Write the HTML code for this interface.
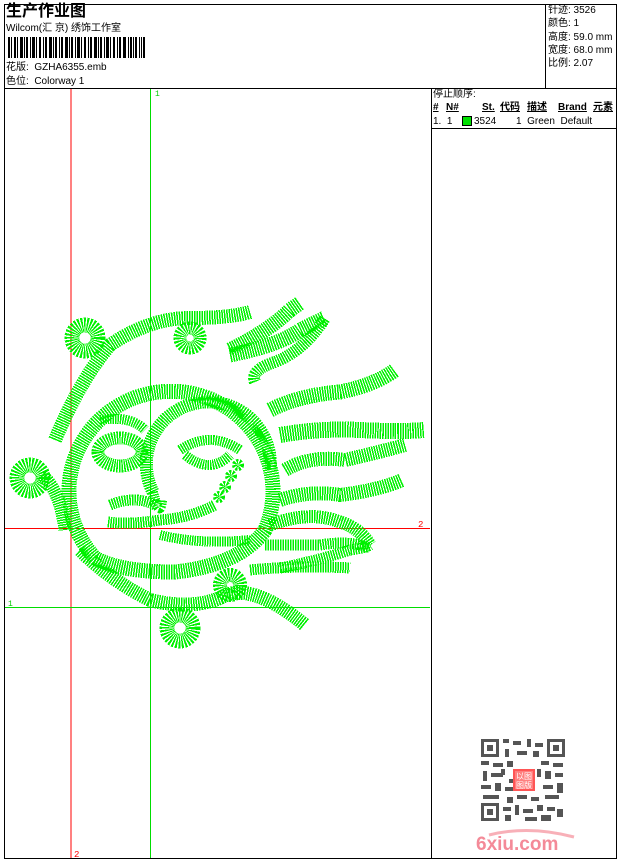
<!DOCTYPE html>
<html><head><meta charset="utf-8"><style>
*{margin:0;padding:0;box-sizing:border-box}
body{width:620px;height:860px;background:#fff;position:relative;overflow:hidden;font-family:"Liberation Sans","Noto Sans CJK SC",sans-serif;color:#000}
.a{position:absolute}
.t{font-size:10px;white-space:nowrap;line-height:12px}
</style></head><body>
<div class="a" style="left:4px;top:4px;width:613px;height:855px;border:1px solid #000"></div>
<div class="a" style="left:4px;top:88px;width:613px;height:1px;background:#000"></div>
<div class="a" style="left:545px;top:4px;width:1px;height:84px;background:#000"></div>
<div class="a" style="left:431px;top:88px;width:1px;height:771px;background:#000"></div>
<div class="a" style="left:431px;top:128px;width:186px;height:1px;background:#000"></div>
<div class="a" style="left:6px;top:2px;font-size:16px;font-weight:bold;line-height:20px">生产作业图</div>
<div class="a t" style="left:6px;top:23px">Wilcom(汇 京) 绣饰工作室</div>
<svg class="a" style="left:8px;top:37px" width="145" height="21">
<g fill="#000">
<rect x="0" width="2" height="21"/><rect x="3" width="1" height="21"/><rect x="6" width="2" height="21"/><rect x="9" width="1" height="21"/><rect x="12" width="3" height="21"/><rect x="16" width="1" height="21"/><rect x="18" width="2" height="21"/><rect x="22" width="1" height="21"/><rect x="24" width="3" height="21"/><rect x="28" width="1" height="21"/><rect x="31" width="2" height="21"/><rect x="35" width="1" height="21"/><rect x="37" width="2" height="21"/><rect x="41" width="3" height="21"/><rect x="45" width="1" height="21"/><rect x="47" width="2" height="21"/><rect x="51" width="1" height="21"/><rect x="53" width="2" height="21"/><rect x="57" width="3" height="21"/><rect x="61" width="1" height="21"/><rect x="63" width="2" height="21"/><rect x="67" width="1" height="21"/><rect x="69" width="3" height="21"/><rect x="73" width="1" height="21"/><rect x="76" width="2" height="21"/><rect x="80" width="1" height="21"/><rect x="82" width="2" height="21"/><rect x="86" width="3" height="21"/><rect x="90" width="1" height="21"/><rect x="92" width="2" height="21"/><rect x="96" width="1" height="21"/><rect x="98" width="3" height="21"/><rect x="102" width="1" height="21"/><rect x="105" width="2" height="21"/><rect x="109" width="1" height="21"/><rect x="111" width="2" height="21"/><rect x="115" width="3" height="21"/><rect x="120" width="1" height="21"/><rect x="122" width="2" height="21"/><rect x="125" width="1" height="21"/><rect x="127" width="2" height="21"/><rect x="131" width="1" height="21"/><rect x="133" width="1" height="21"/><rect x="135" width="2" height="21"/>
</g></svg>
<div class="a t" style="left:6px;top:62px">花版:&nbsp; GZHA6355.emb</div>
<div class="a t" style="left:6px;top:76px">色位:&nbsp; Colorway 1</div>
<div class="a t" style="left:548px;top:5px">针迹: 3526</div>
<div class="a t" style="left:548px;top:18px">颜色: 1</div>
<div class="a t" style="left:548px;top:32px">高度: 59.0 mm</div>
<div class="a t" style="left:548px;top:45px">宽度: 68.0 mm</div>
<div class="a t" style="left:548px;top:58px">比例: 2.07</div>
<div class="a t" style="left:433px;top:89px">停止顺序:</div>
<div class="a t" style="left:433px;top:102px;font-weight:bold;text-decoration:underline">#</div>
<div class="a t" style="left:446px;top:102px;font-weight:bold;text-decoration:underline">N#</div>
<div class="a t" style="left:482px;top:102px;font-weight:bold;text-decoration:underline">St.</div>
<div class="a t" style="left:500px;top:102px;font-weight:bold;text-decoration:underline">代码</div>
<div class="a t" style="left:527px;top:102px;font-weight:bold;text-decoration:underline">描述</div>
<div class="a t" style="left:558px;top:102px;font-weight:bold;text-decoration:underline">Brand</div>
<div class="a t" style="left:593px;top:102px;font-weight:bold;text-decoration:underline">元素</div>
<div class="a t" style="left:433px;top:116px">1.&nbsp; 1</div>
<div class="a" style="left:462px;top:116px;width:10px;height:10px;background:#00e000;border:1px solid #000"></div>
<div class="a t" style="left:474px;top:116px">3524</div>
<div class="a t" style="left:516px;top:116px">1&nbsp; Green&nbsp; Default</div>

<svg class="a" style="left:0;top:0" width="620" height="860">
<line x1="71" y1="89" x2="71" y2="858" stroke="#f00" stroke-width="1"/>
<line x1="150.5" y1="89" x2="150.5" y2="858" stroke="#0d0" stroke-width="1"/>
<line x1="5" y1="528.5" x2="430" y2="528.5" stroke="#f00" stroke-width="1"/>
<line x1="5" y1="607.5" x2="430" y2="607.5" stroke="#0d0" stroke-width="1"/>
<text x="155" y="96" font-size="8" fill="#0c0" font-family="Liberation Mono">1</text>
<text x="8" y="606" font-size="8" fill="#0c0" font-family="Liberation Mono">1</text>
<text x="418" y="527" font-size="9" fill="#f00" font-family="Liberation Mono">2</text>
<text x="74" y="857" font-size="9" fill="#f00" font-family="Liberation Mono">2</text>
<g fill="none" stroke="#00f000" stroke-dasharray="1.5 1" stroke-linecap="butt" shape-rendering="crispEdges">
<path d="M95 558 A102 100 0 1 1 265 530 Q240 565 175 572 Q120 572 95 558" stroke-width="15"/>
<path d="M153 492 A62 62 0 1 1 270 470" stroke-width="13"/>
<path d="M153 492 Q160 520 162 500" stroke-width="10"/>
<path d="M55 440 Q80 380 110 345 Q150 318 190 318 Q230 318 250 312" stroke-width="14"/>
<circle cx="85" cy="338" r="13" stroke-width="15"/>
<circle cx="190" cy="338" r="10" stroke-width="13"/>
<path d="M230 350 Q270 330 290 310 L300 303" stroke-width="15"/>
<path d="M230 355 Q280 345 300 330 L325 318" stroke-width="15"/>
<path d="M255 382 Q250 370 275 362 Q305 350 325 318" stroke-width="12"/>
<path d="M270 410 Q300 395 340 392 Q375 385 395 370" stroke-width="15"/>
<path d="M280 435 Q320 428 360 430 Q400 432 424 430" stroke-width="16"/>
<path d="M285 470 Q310 455 345 460 Q380 452 405 445" stroke-width="14"/>
<path d="M280 500 Q310 490 340 495 Q380 490 402 480" stroke-width="14"/>
<path d="M270 525 Q310 510 340 522 Q360 528 370 545" stroke-width="13"/>
<path d="M265 545 Q300 545 320 545 Q350 540 370 548" stroke-width="11"/>
<path d="M280 568 Q320 560 350 550 Q365 548 370 545" stroke-width="11"/>
<path d="M250 570 Q300 565 350 568" stroke-width="11"/>
<circle cx="30" cy="478" r="13" stroke-width="15"/>
<path d="M42 475 Q60 490 65 530" stroke-width="13"/>
<path d="M80 550 Q110 580 150 600 Q190 610 220 598 Q250 580 305 625" stroke-width="14"/>
<circle cx="230" cy="585" r="10" stroke-width="14"/>
<circle cx="180" cy="628" r="13" stroke-width="15"/>
<path d="M120 440 m-22 12 a22 14 0 1 0 44 0 a22 14 0 1 0 -44 0" stroke-width="13"/>
<path d="M100 420 Q130 415 145 430" stroke-width="10"/>
<path d="M180 450 Q210 430 240 450" stroke-width="10"/>
<path d="M185 455 Q210 475 230 455" stroke-width="10"/>
<path d="M110 505 Q135 495 155 505" stroke-width="11"/>
<path d="M108 522 Q130 525 160 520 Q190 518 215 505" stroke-width="11"/>
<path d="M160 535 Q200 545 250 540" stroke-width="10"/>
<circle cx="238" cy="465" r="3" stroke-width="6"/><circle cx="231" cy="476" r="3" stroke-width="6"/><circle cx="225" cy="487" r="3" stroke-width="6"/><circle cx="219" cy="497" r="3" stroke-width="6"/>
</g>
</svg>

<svg class="a" style="left:481px;top:739px" width="84" height="82">
<rect width="84" height="82" fill="#fff"/>
<g fill="#555">
<rect x="0" y="0" width="18" height="18"/><rect x="3" y="3" width="12" height="12" fill="#fff"/><rect x="6" y="6" width="6" height="6"/>
<rect x="66" y="0" width="18" height="18"/><rect x="69" y="3" width="12" height="12" fill="#fff"/><rect x="72" y="6" width="6" height="6"/>
<rect x="0" y="64" width="18" height="18"/><rect x="3" y="67" width="12" height="12" fill="#fff"/><rect x="6" y="70" width="6" height="6"/>
<rect x="22" y="0" width="6" height="4"/><rect x="32" y="2" width="8" height="4"/><rect x="46" y="0" width="4" height="8"/><rect x="54" y="4" width="8" height="4"/><rect x="24" y="10" width="4" height="8"/><rect x="36" y="12" width="10" height="4"/><rect x="52" y="12" width="6" height="6"/>
<rect x="0" y="22" width="8" height="4"/><rect x="12" y="24" width="10" height="4"/><rect x="26" y="22" width="6" height="6"/><rect x="60" y="22" width="8" height="4"/><rect x="72" y="24" width="10" height="4"/>
<rect x="2" y="32" width="4" height="10"/><rect x="10" y="34" width="12" height="4"/><rect x="64" y="32" width="6" height="8"/><rect x="74" y="34" width="8" height="4"/>
<rect x="0" y="46" width="10" height="4"/><rect x="14" y="44" width="6" height="8"/><rect x="24" y="48" width="8" height="4"/><rect x="62" y="46" width="10" height="4"/><rect x="76" y="44" width="6" height="10"/>
<rect x="2" y="56" width="16" height="4"/><rect x="26" y="58" width="6" height="6"/><rect x="36" y="56" width="10" height="4"/><rect x="50" y="58" width="8" height="4"/><rect x="64" y="56" width="14" height="4"/>
<rect x="22" y="68" width="8" height="4"/><rect x="34" y="66" width="4" height="10"/><rect x="42" y="70" width="10" height="4"/><rect x="56" y="66" width="6" height="6"/><rect x="66" y="68" width="8" height="4"/><rect x="76" y="70" width="6" height="8"/><rect x="24" y="76" width="6" height="6"/><rect x="44" y="78" width="12" height="4"/><rect x="60" y="76" width="10" height="6"/>
<rect x="20" y="30" width="4" height="6"/><rect x="56" y="30" width="4" height="8"/><rect x="28" y="40" width="4" height="4"/>
</g>
<rect x="32" y="30" width="22" height="22" fill="#f55"/>
<rect x="34" y="32" width="18" height="18" fill="#fff" opacity=".25"/>
<text x="35" y="40" font-size="8" fill="#fff" font-family="Noto Sans CJK SC">以</text><text x="43" y="40" font-size="8" fill="#fff" font-family="Noto Sans CJK SC">图</text>
<text x="35" y="49" font-size="8" fill="#fff" font-family="Noto Sans CJK SC">图</text><text x="43" y="49" font-size="8" fill="#fff" font-family="Noto Sans CJK SC">版</text>
</svg>
<svg class="a" style="left:474px;top:825px" width="105" height="30">
<path d="M15 10 Q55 0 100 12" stroke="#f8b0b8" stroke-width="3" fill="none"/>
<text x="2" y="25" font-size="19" font-weight="bold" fill="#f48a98" font-family="Liberation Sans">6xiu.com</text>
</svg>
</body></html>
